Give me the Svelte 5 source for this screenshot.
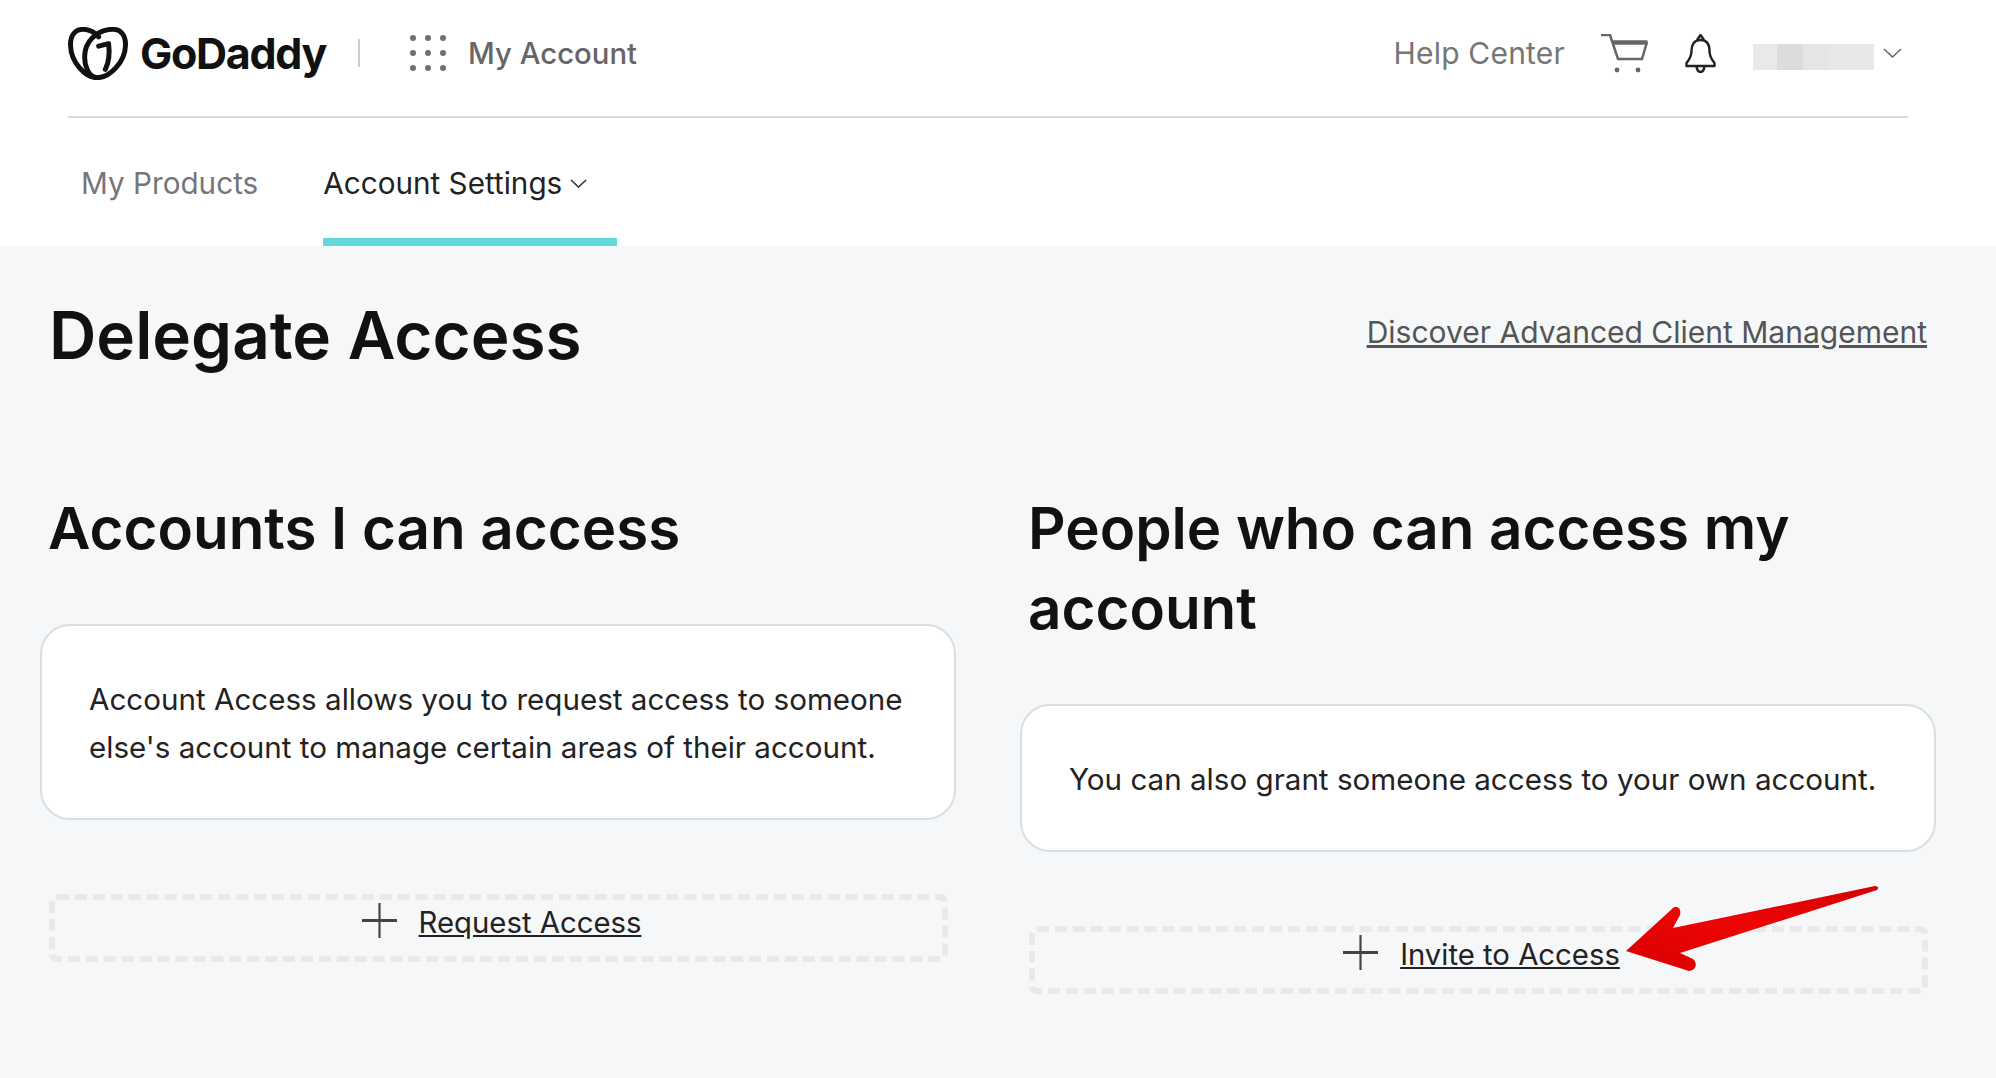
<script lang="ts">
  // Delegate access page, account settings section
  const dots = Array.from({ length: 9 }, (_, i) => i);
  const columns = [
    {
      title: 'Accounts I can access',
      body: "Account Access allows you to request access to someone else's account to manage certain areas of their account.",
      action: 'Request Access'
    },
    {
      title: 'People who can access my account',
      body: 'You can also grant someone access to your own account.',
      action: 'Invite to Access'
    }
  ];
</script>

<header class="header">
  <div class="topbar">
    <a class="logo" href="#home" aria-label="GoDaddy">
      <svg class="logo-mark" width="60" height="53" viewBox="0 0 180 160" fill="none" stroke="#111" stroke-width="15" stroke-linecap="round" stroke-linejoin="round">
        <path d="M88 153C50 153 8 105 7 55C6 25 22 7 45 7C62 7 78 14 92 30"/>
        <path d="M88 153C126 153 172 105 173 55C174 25 158 7 135 7C100 7 62 30 52 70C44 110 60 153 88 153"/>
        <path d="M92 58L122 50C126 80 124 104 112 128"/>
      </svg>
      <span class="wordmark">GoDaddy</span>
    </a>
    <span class="separator"></span>
    <span class="dots">
      {#each dots as d (d)}
        <i></i>
      {/each}
    </span>
    <span class="product">My Account</span>
    <span class="spacer"></span>
    <a class="help" href="#help">Help Center</a>
    <svg class="cart" width="47" height="39" viewBox="0 0 47 39" fill="none" stroke="#666">
      <path d="M0 1H9L17 25H42" stroke-width="2.5"/>
      <path d="M11 8.5H46.5" stroke-width="4.5"/>
      <path d="M46 8L41 25" stroke-width="2.5"/>
      <circle cx="16" cy="36" r="2.4" fill="#666" stroke="none"/>
      <circle cx="37" cy="36" r="2.4" fill="#666" stroke="none"/>
    </svg>
    <svg class="bell" width="31" height="39" viewBox="0 0 31 39" fill="none" stroke="#222" stroke-width="2.4" stroke-linejoin="round">
      <path d="M15.5 6C9 6 6.5 11 6.5 17C6.5 23 4 26 1.5 29V32H29.5V29C27 26 24.5 23 24.5 17C24.5 11 22 6 15.5 6Z"/>
      <path d="M12 6L15.5 1L19 6"/>
      <path d="M11.5 32C12 36.5 14 38 15.5 38C17 38 19 36.5 19.5 32"/>
    </svg>
    <span class="user-blur" aria-hidden="true">
      <i class="b1"></i><i class="b2"></i><i class="b3"></i><i class="b4"></i>
    </span>
    <svg class="user-chevron" width="19" height="10" viewBox="0 0 19 10" fill="none" stroke="#666" stroke-width="1.5"><path d="M1 1L9.5 9L18 1"/></svg>
  </div>
  <nav class="tabs">
    <a class="tab" href="#products">My Products</a>
    <a class="tab active" href="#settings">
      Account Settings
      <svg width="17" height="9" viewBox="0 0 17 9" fill="none" stroke="#333" stroke-width="1.6"><path d="M1 1L8.5 8L16 1"/></svg>
    </a>
  </nav>
</header>

<main class="main">
  <div class="title-row">
    <h1>Delegate Access</h1>
    <a class="discover" href="#discover">Discover Advanced Client Management</a>
  </div>

  <div class="columns">
    {#each columns as col (col.title)}
      <section class="column">
        <h2>{col.title}</h2>
        <div class="card"><p>{col.body}</p></div>
        <div class="add-box">
          <svg class="plus" width="35" height="35" viewBox="0 0 35 35" stroke="#444"><path d="M17.5 0V35" stroke-width="2.2"/><path d="M0 17.5H35" stroke-width="3.2"/></svg>
          <a href="#add">{col.action}</a>
        </div>
      </section>
    {/each}
  </div>

  <svg class="arrow" width="254" height="88" viewBox="0 0 254 88" aria-hidden="true">
    <defs>
      <linearGradient id="arrow-red" x1="0" y1="1" x2="1" y2="0">
        <stop offset="0" stop-color="#d80000"/>
        <stop offset="0.5" stop-color="#ee0505"/>
        <stop offset="1" stop-color="#d50000"/>
      </linearGradient>
    </defs>
    <path d="M1 66L47 24C50 20 57 22 55 30L48 43L250 1C253 1 254 3 252 5L55 68L68 74C73 78 71 86 64 86Z" fill="url(#arrow-red)"/>
  </svg>
</main>

<style>
  :global(body) {
    background: #f5f7f8;
    font-family: "Inter", "Liberation Sans", sans-serif;
    color: #111;
  }

  a {
    color: inherit;
  }

  .header {
    background: #fff;
  }

  .topbar {
    display: flex;
    align-items: center;
    height: 106px;
    padding-bottom: 10px;
    margin: 0 88px 0 68px;
    border-bottom: 2px solid #d4dbe0;
  }

  .logo {
    display: flex;
    align-items: center;
    gap: 12px;
    text-decoration: none;
  }

  .wordmark {
    font-size: 43px;
    font-weight: 700;
    letter-spacing: -1.3px;
    color: #111;
  }

  .separator {
    width: 2px;
    height: 28px;
    margin: 0 50px 0 32px;
    background: #ccc;
  }

  .dots {
    display: grid;
    grid-template-columns: repeat(3, 6px);
    gap: 9px;
  }

  .dots i {
    width: 6px;
    height: 6px;
    border-radius: 50%;
    background: #707070;
  }

  .product {
    margin-left: 22px;
    font-size: 29.3px;
    font-weight: 500;
    color: #666;
  }

  .spacer {
    flex: 1;
  }

  .help {
    font-size: 30px;
    letter-spacing: 0.2px;
    color: #767676;
    text-decoration: none;
  }

  .cart {
    margin-left: 36px;
  }

  .bell {
    margin-left: 37px;
  }

  .user-blur {
    display: flex;
    align-items: flex-end;
    width: 121px;
    height: 33px;
    margin-left: 37px;
  }

  .user-blur i {
    height: 26px;
    background: #e9e9e9;
  }

  .user-blur .b1 { width: 24px; }
  .user-blur .b2 { width: 26px; background: #dcdcdc; }
  .user-blur .b3 { width: 26px; background: #e5e5e5; }
  .user-blur .b4 { width: 45px; background: #e8e8e8; }

  .user-chevron {
    margin-left: 9px;
    margin-right: 6px;
  }

  .tabs {
    display: flex;
    height: 128px;
    padding-left: 81px;
    gap: 65px;
  }

  .tab {
    display: flex;
    align-items: center;
    gap: 8px;
    padding-top: 2px;
    border-block: 8px solid transparent;
    font-size: 29.7px;
    color: #767676;
    text-decoration: none;
  }

  .tab.active {
    width: 294px;
    box-sizing: border-box;
    color: #222;
    border-bottom-color: #63d8d8;
  }

  .main {
    position: relative;
    padding: 48px 61px 0 40px;
  }

  .title-row {
    display: flex;
    align-items: center;
    justify-content: space-between;
    margin: 0 0 0 9px;
    padding-right: 8px;
  }

  h1 {
    margin: 0;
    font-size: 65.6px;
    line-height: 82px;
    font-weight: 600;
    color: #111;
  }

  .discover {
    margin-top: -7px;
    font-size: 30px;
    color: #555;
  }

  .columns {
    display: grid;
    grid-template-columns: 916px 916px;
    gap: 64px;
    margin-top: 112px;
  }

  h2 {
    margin: 0 7px 56px 8px;
    font-size: 58.3px;
    line-height: 80px;
    font-weight: 600;
    color: #111;
  }

  .card {
    padding: 49px 47px 47px;
    border: 2px solid #d9dfe3;
    border-radius: 30px;
    background: #fff;
  }

  .card p {
    margin: 0;
    font-size: 29.6px;
    line-height: 48px;
    color: #222;
  }

  .add-box {
    display: flex;
    align-items: center;
    justify-content: center;
    gap: 22px;
    height: 68px;
    margin: 74px 8px 0 9px;
    padding: 0 0 11px 6px;
    border: 6px dashed #e8e9ea;
    border-radius: 8px;
    box-sizing: border-box;
    font-size: 29.3px;
    color: #222;
  }

  .plus {
    margin-bottom: 5px;
  }

  .arrow {
    position: absolute;
    left: 1625px;
    top: 639px;
  }
</style>
